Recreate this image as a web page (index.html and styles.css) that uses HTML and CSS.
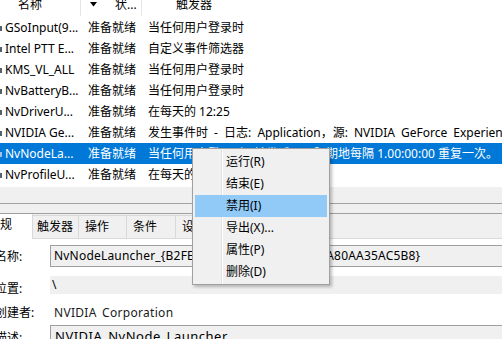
FILE: index.html
```html
<!DOCTYPE html>
<html>
<head>
<meta charset="utf-8">
<link rel="stylesheet" href="styles.css">
</head>
<body>
<div class="screen">
  <div class="list">
    <div class="hdr">
      <div class="hc hc-name"><span>名称</span></div>
      <div class="hc hc-status"><svg class="sort" width="7" height="5" viewBox="0 0 7 5"><path d="M0 0H7L3.5 4.5Z" fill="#000"/></svg><span>状...</span></div>
      <div class="hc hc-trig"><span>触发器</span></div>
    </div>
    <div class="row"><div class="c-name"><i class="ico"></i>GSoInput(9...</div><div class="c-status">准备就绪</div><div class="c-trig">当任何用户登录时</div></div>
    <div class="row"><div class="c-name"><i class="ico"></i>Intel PTT E...</div><div class="c-status">准备就绪</div><div class="c-trig">自定义事件筛选器</div></div>
    <div class="row"><div class="c-name"><i class="ico"></i>KMS_VL_ALL</div><div class="c-status">准备就绪</div><div class="c-trig">当任何用户登录时</div></div>
    <div class="row"><div class="c-name"><i class="ico"></i>NvBatteryB...</div><div class="c-status">准备就绪</div><div class="c-trig">当任何用户登录时</div></div>
    <div class="row"><div class="c-name"><i class="ico"></i>NvDriverU...</div><div class="c-status">准备就绪</div><div class="c-trig">在每天的 12:25</div></div>
    <div class="row"><div class="c-name"><i class="ico"></i>NVIDIA Ge...</div><div class="c-status">准备就绪</div><div class="c-trig c-wide">发生事件时 - 日志: Application，源: NVIDIA GeForce Experience，事件 ID: 0</div></div>
    <div class="row sel"><div class="c-name"><i class="ico"></i>NvNodeLa...</div><div class="c-status">准备就绪</div><div class="c-trig">当任何用户登录时 - 触发后，无限期地每隔 1.00:00:00 重复一次。</div></div>
    <div class="row"><div class="c-name"><i class="ico"></i>NvProfileU...</div><div class="c-status">准备就绪</div><div class="c-trig">在每天的 12:25</div></div>
  </div>
  <div class="hscroll"></div>
  <div class="split"></div>
  <div class="tabs">
    <div class="tab tab-sel">常规</div>
    <div class="tab tab-w46">触发器</div>
    <div class="tab tab-w48">操作</div>
    <div class="tab tab-w49">条件</div>
    <div class="tab tab-w60">设置</div>
    <div class="tab-fill"></div>
  </div>
  <div class="panel">
    <div class="frow r-name"><span class="lbl">名称:</span><div class="box box-name">NvNodeLauncher_{B2FE1952-0186-46C3-BAEC-A80AA35AC5B8}</div></div>
    <div class="frow r-loc"><span class="lbl">位置:</span><div class="val-loc">\</div></div>
    <div class="frow r-auth"><span class="lbl">创建者:</span><div class="val-auth">NVIDIA Corporation</div></div>
    <div class="frow r-desc"><span class="lbl">描述:</span><div class="box box-desc">NVIDIA NvNode Launcher</div></div>
  </div>

  <div class="menu">
    <div class="mi">运行(R)</div>
    <div class="mi">结束(E)</div>
    <div class="mi mi-hot">禁用(I)</div>
    <div class="mi">导出(X)...</div>
    <div class="mi">属性(P)</div>
    <div class="mi">删除(D)</div>
  </div>
</div>
</body>
</html>
```

FILE: styles.css
```css
html, body {
  margin: 0;
  padding: 0;
  background: #fff;
}

.screen {
  position: relative;
  width: 502px;
  height: 339px;
  overflow: hidden;
  font-family: "Noto Sans", "Noto Sans CJK SC", sans-serif;
  font-size: 12px;
  color: #000;
}

/* ---------- list ---------- */
.list {
  background: #fff;
  padding-bottom: 2px;
}

.hdr {
  display: flex;
  height: 17px;
  overflow: hidden;
}

.hc {
  display: flex;
  align-items: flex-start;
  height: 16px;
  line-height: 22px;
  white-space: nowrap;
  box-sizing: border-box;
}

.hc span {
  margin-top: -6px;
}

.hc-name {
  width: 81px;
  padding-left: 18px;
  border-right: 1px solid #e5e5e5;
}

.hc-status {
  width: 61px;
  padding-left: 9px;
  border-right: 1px solid #e5e5e5;
}

.sort {
  margin-top: 2px;
  margin-right: 18px;
  flex: none;
}

.hc-trig {
  flex: 1;
  padding-left: 34px;
}

.row {
  display: grid;
  grid-template-columns: 81px 61px 1fr;
  box-sizing: border-box;
  height: 21px;
  padding-top: 1px;
  line-height: 20px;
  white-space: nowrap;
  overflow: hidden;
}

.row.sel {
  background: #0078d7;
  color: #fff;
}

.c-name {
  display: flex;
  align-items: center;
  overflow: hidden;
}

.ico {
  display: inline-block;
  width: 2px;
  height: 5px;
  background: #56606c;
  margin-right: 3px;
  flex: none;
}

.sel .ico {
  background: #9cc4ea;
}

.c-status {
  padding-left: 7px;
  overflow: hidden;
}

.c-trig {
  padding-left: 6px;
  overflow: hidden;
}

.c-wide {
  word-spacing: 3px;
}

/* ---------- middle bands ---------- */
.hscroll {
  height: 16px;
  background: #f0f0f0;
}

.split {
  height: 9px;
  background: #f0f0f0;
  border-top: 1px solid #a0a0a0;
}

/* ---------- tabs ---------- */
.tabs {
  display: flex;
  align-items: flex-end;
  height: 25px;
  background: #f0f0f0;
  border-top: 1px solid #a0a0a0;
}

.tab {
  flex: none;
  box-sizing: border-box;
  height: 24px;
  line-height: 22px;
  padding-left: 5px;
  border-top: 1px solid #d9d9d9;
  border-bottom: 1px solid #d9d9d9;
  border-right: 1px solid #d9d9d9;
  white-space: nowrap;
  overflow: hidden;
}

.tab-sel {
  height: 25px;
  width: 51px;
  margin-left: -18px;
  padding-left: 6px;
  line-height: 22px;
  background: #fff;
  border-top: none;
  border-bottom: none;
}

.tab-w46 { width: 46px; padding-left: 4px; }
.tab-w48 { width: 48px; padding-left: 6px; }
.tab-w49 { width: 49px; padding-left: 6px; }
.tab-w60 { width: 60px; padding-left: 6px; }

.tab-fill {
  flex: 1;
  height: 1px;
  background: #d9d9d9;
}

/* ---------- panel ---------- */
.panel {
  background: #fff;
  padding-top: 6px;
  height: 100px;
}

.frow {
  display: flex;
  align-items: center;
  white-space: nowrap;
}

.lbl {
  flex: none;
  width: 55px;
  margin-left: -5px;
}

.box {
  flex: 1;
  box-sizing: border-box;
  height: 22px;
  line-height: 20px;
  border: 1px solid #a0a0a0;
  border-right: none;
  background: #f0f0f0;
  padding-left: 3px;
  overflow: hidden;
}

.box-name {
  letter-spacing: 0.2px;
}

.box-desc {
  padding-left: 4px;
  font-size: 13px;
  letter-spacing: 0.5px;
  word-spacing: 2px;
}

.r-name { height: 22px; }

.r-loc {
  margin-top: 9px;
  height: 18px;
}

.r-loc .lbl { margin-top: 5px; }

.val-loc {
  flex: 1;
  height: 18px;
  line-height: 18px;
  background: #f0f0f0;
  padding-left: 2px;
}

.r-auth {
  margin-top: 8px;
  height: 20px;
}

.val-auth {
  padding-left: 4px;
  color: #1a1a1a;
  letter-spacing: 0.3px;
  word-spacing: 2px;
}

.r-desc {
  margin-top: 3px;
  height: 22px;
  align-items: flex-start;
}

.r-desc .lbl { margin-top: 3px; }

/* ---------- context menu ---------- */
.menu {
  position: absolute;
  left: 192px;
  top: 148px;
  width: 138px;
  height: 137px;
  box-sizing: border-box;
  padding: 2px 0 1px;
  border: 1px solid #a0a0a0;
  background: linear-gradient(to right, #f0f0f0 28px, #e2e2e2 28px, #e2e2e2 29px, #fff 29px, #fff 30px, #f0f0f0 30px);
  box-shadow: 2px 2px 3px rgba(0, 0, 0, 0.25);
}

.mi {
  height: 22px;
  line-height: 22px;
  padding-left: 33px;
  white-space: nowrap;
}

.mi-hot {
  margin: 0 2px;
  padding-left: 31px;
  background: #91c9f7;
}
```
